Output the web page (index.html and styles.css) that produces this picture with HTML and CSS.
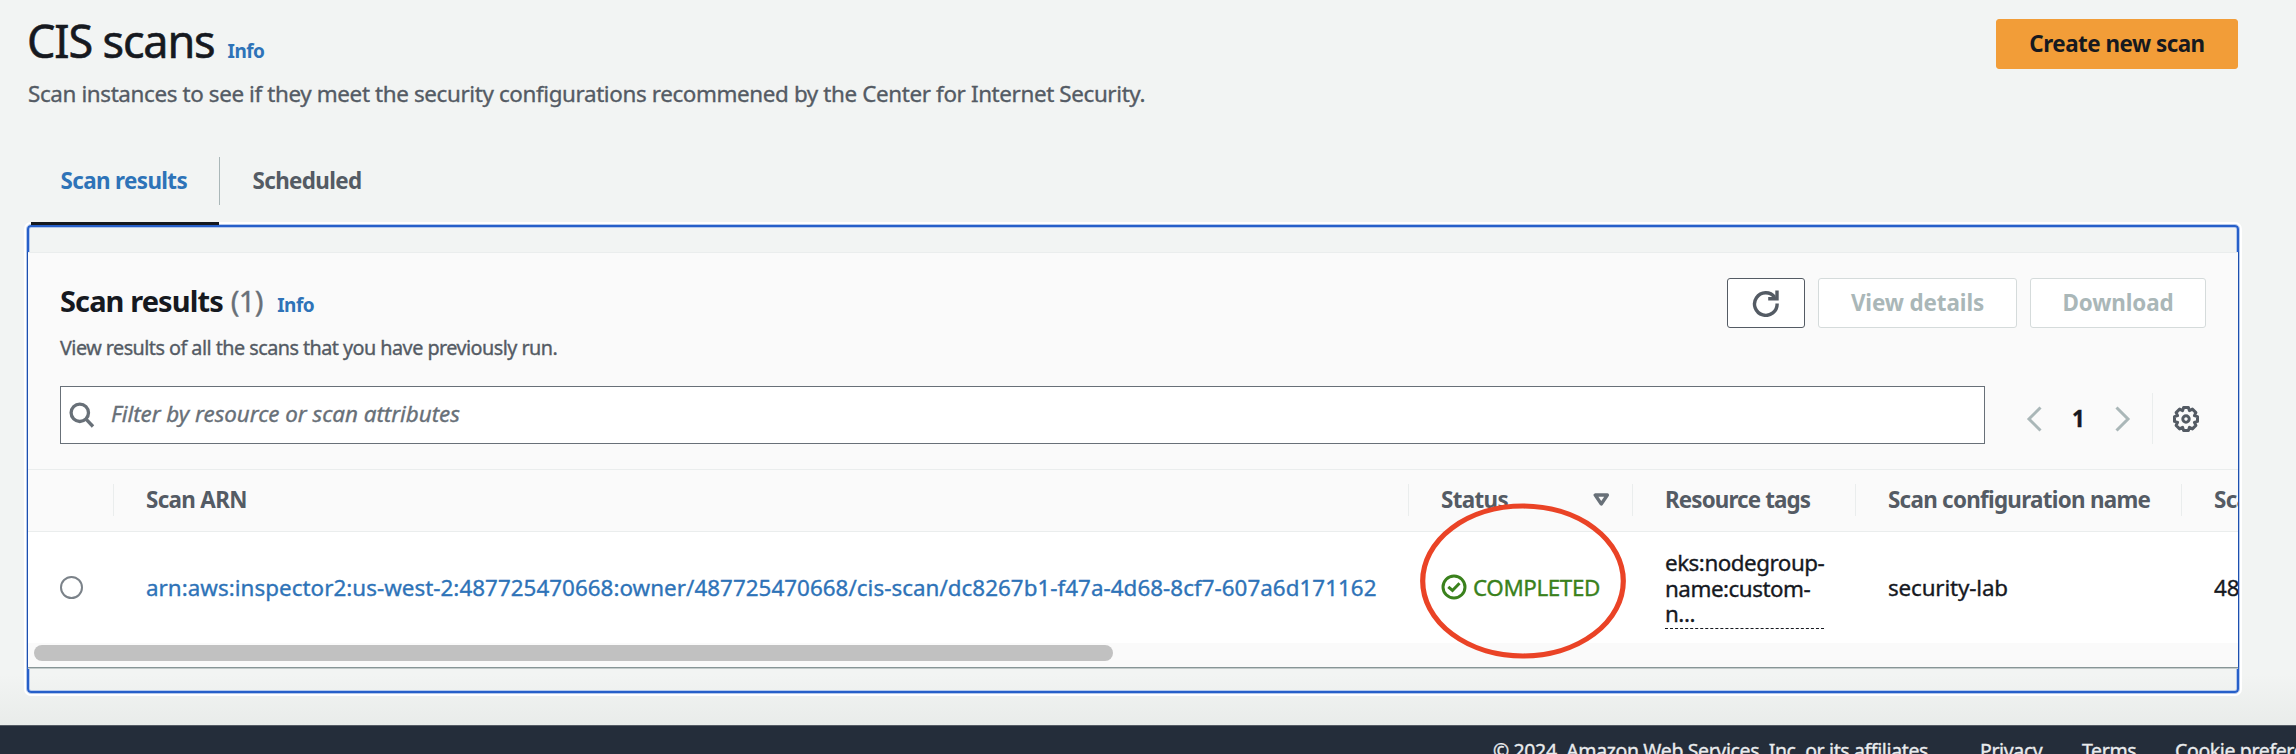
FILE: index.html
```
<!DOCTYPE html>
<html lang="en">
<head>
<meta charset="utf-8">
<title>CIS scans</title>
<link rel="stylesheet" href="styles.css">
</head>
<body>
<main class="page">
  <header class="page-header">
    <div class="page-intro">
      <div class="title-row"><h1 class="page-title">CIS scans</h1><a class="info">Info</a></div>
      <p class="page-desc">Scan instances to see if they meet the security configurations recommened by the Center for Internet Security.</p>
    </div>
    <button class="btn btn-primary">Create new scan</button>
  </header>

  <nav class="tabs">
    <a class="tab tab-active">Scan results</a>
    <a class="tab tab-scheduled">Scheduled</a>
  </nav>

  <section class="focus-frame">
    <div class="panel">
      <div class="panel-header">
        <div class="panel-intro">
          <div class="title-row"><h2 class="panel-title">Scan results</h2><span class="count">(1)</span><a class="info">Info</a></div>
          <p class="panel-desc">View results of all the scans that you have previously run.</p>
        </div>
        <div class="actions">
          <button class="btn btn-refresh" aria-label="Refresh">
            <svg width="28" height="28" viewBox="0 0 28 28" fill="none" stroke="#545b64" stroke-width="3.4"><path d="M25.1 14.500A11.300 11.300 0 1 1 22.800 8.200"/><path d="M25 1.500V9.800H16.200"/></svg>
          </button>
          <button class="btn btn-disabled btn-view">View details</button>
          <button class="btn btn-disabled btn-download">Download</button>
        </div>
      </div>
      <div class="toolbar">
        <div class="search">
          <svg width="26" height="26" viewBox="0 0 26 26" fill="none" stroke="#687078" stroke-width="3.300"><circle cx="10.800" cy="10.800" r="8.700"/><path d="M16.800 16.800L24 24.500"/></svg>
          <span class="placeholder">Filter by resource or scan attributes</span>
        </div>
        <div class="pager">
          <svg width="16" height="26" viewBox="0 0 16 26" fill="none" stroke="#aab7b8" stroke-width="3"><path d="M14.500 1.500L3 13L14.500 24.500"/></svg>
          <span class="page-number">1</span>
          <svg width="16" height="26" viewBox="0 0 16 26" fill="none" stroke="#aab7b8" stroke-width="3"><path d="M1.500 1.500L13 13L1.500 24.500"/></svg>
        </div>
        <div class="settings">
          <svg width="28" height="28" viewBox="-14 -14 28 28" fill="none" stroke="#545b64" stroke-width="3" stroke-linejoin="round"><path d="M-2.400 -11.500H2.400L3.400 -8.400L6.400 -9.900L9.900 -6.400L8.400 -3.400L11.500 -2.400V2.400L8.400 3.400L9.900 6.400L6.400 9.900L3.400 8.400L2.400 11.500H-2.400L-3.400 8.400L-6.400 9.900L-9.900 6.400L-8.400 3.400L-11.500 2.400V-2.400L-8.400 -3.400L-9.900 -6.400L-6.400 -9.900L-3.400 -8.400Z"/><circle r="3.200"/></svg>
        </div>
      </div>
      <div class="grid-row grid-head">
        <div class="th"></div>
        <div class="th">Scan ARN</div>
        <div class="th th-status">Status<svg width="17" height="14" viewBox="0 0 17 14" fill="none" stroke="#687078" stroke-width="3.300" stroke-linejoin="round"><path d="M2.200 2H14.400L8.300 11Z"/></svg></div>
        <div class="th th-tags">Resource tags</div>
        <div class="th th-config">Scan configuration name</div>
        <div class="th">Scan</div>
      </div>
      <div class="grid-row grid-body">
        <div class="td td-select"><span class="radio"></span></div>
        <div class="td"><a class="arn">arn:aws:inspector2:us-west-2:487725470668:owner/487725470668/cis-scan/dc8267b1-f47a-4d68-8cf7-607a6d171162</a></div>
        <div class="td td-status">
          <svg width="26" height="26" viewBox="0 0 26 26" fill="none" stroke="#3a811c" stroke-width="3"><circle cx="13" cy="13" r="11"/><path d="M7.300 12.800L11.500 16.500L18.500 9.300"/></svg>
          <span>COMPLETED</span>
        </div>
        <div class="td td-tags"><span class="tags">eks:nodegroup-<br>name:custom-<br>n...</span></div>
        <div class="td">security-lab</div>
        <div class="td">487725470668</div>
      </div>
      <div class="scrollbar"><div class="thumb"></div></div>
    </div>
  </section>
</main>
<footer class="footer">
  <span class="copyright">© 2024, Amazon Web Services, Inc. or its affiliates.</span>
  <a class="privacy">Privacy</a>
  <a class="terms">Terms</a>
  <a class="cookies">Cookie preferences</a>
</footer>
<svg class="highlight" width="208" height="158" viewBox="0 0 208 158" fill="none" stroke="#ea4326" stroke-width="5.200"><ellipse cx="104" cy="79" rx="100.300" ry="75"/></svg>
</body>
</html>
```
FILE: styles.css
```
* { box-sizing: border-box; }

body {
  margin: 0;
  height: 754px;
  overflow: hidden;
  background: #f2f4f3;
  color: #16191f;
  font: 22.4px/30px "Noto Sans", "Open Sans", sans-serif;
  -webkit-text-stroke: .35px;
  display: flex;
  flex-direction: column;
}

h1, h2, p { margin: 0; }
svg { display: block; flex: none; }

.page {
  height: 725px;
  padding: 13px 58px 0 28px;
  background: linear-gradient(#f2f4f300 674px, #e9ecea) #f2f4f3;
}

.page-header { display: flex; justify-content: space-between; height: 144px; }
.title-row { display: flex; align-items: baseline; }
.page-title { font-size: 45px; line-height: 55px; font-weight: 400; letter-spacing: -1.15px; margin-left: -1px; -webkit-text-stroke: .6px; }
.info { color: #2e73b8; font-weight: 700; font-size: 19px; letter-spacing: -.5px; margin-left: 13px; -webkit-text-stroke: 0; }
.page-desc { color: #545b64; letter-spacing: -.37px; margin-top: 11px; }

.btn {
  height: 50px;
  padding: 0;
  border: 1px solid #d5dbdb;
  border-radius: 3px;
  background: #fff;
  font: 700 22.4px/30px "Noto Sans", "Open Sans", sans-serif;
  letter-spacing: -.1px;
  -webkit-text-stroke: 0;
}
.btn-primary { width: 242px; margin-top: 6px; background: #f29d38; border-color: #f29d38; color: #16191f; letter-spacing: -.5px; }
.btn-refresh { width: 78px; border-color: #545b64; display: flex; align-items: center; justify-content: center; }
.btn-disabled { color: #aab7b8; }
.btn-view { width: 199px; }
.btn-download { width: 176px; }

.tabs { display: flex; height: 68px; margin-left: 3px; font-weight: 700; letter-spacing: -.62px; line-height: 48px; color: #545b64; position: relative; z-index: 1; -webkit-text-stroke: 0; }
.tab { padding-left: 32.500px; }
.tab-active { width: 188px; padding-left: 29.500px; color: #2e73b8; border-bottom: 3px solid #16191f; }
.tab-scheduled { border-left: 1px solid #aab7b8; height: 48px; }

.focus-frame {
  width: 2214px;
  height: 470px;
  margin: -1px 0 0 -2px;
  padding: 27px 1px 0;
  border: 1px solid #b4c8ec;
  border-radius: 5px;
  box-shadow: inset 0 0 0 2px #265fc9, inset 0 0 0 3px #b4c8ec, 0 0 0 2px #fff;
}

.panel {
  height: 415px;
  border-top: 1px solid #eaeded;
  background: #fafafa;
  box-shadow: -1px 0 0 #1d4fae, 1px 0 0 #1d4fae, 0 1px 0 #879596, 0 2px 0 #c4cccc;
  overflow: hidden;
}

.panel-header { display: flex; justify-content: space-between; height: 133px; padding: 25px 32px 0; }
.panel-title { font-size: 29px; line-height: 38px; font-weight: 700; letter-spacing: -.9px; -webkit-text-stroke: 0; }
.count { font-size: 29px; color: #687078; margin-left: 8px; letter-spacing: -.7px; }
.panel .info { margin-left: 14.500px; }
.panel-intro { padding-top: 4px; }
.panel-desc { font-size: 19.800px; letter-spacing: -.53px; color: #545b64; margin-top: 13px; }
.actions { display: flex; gap: 13px; }

.toolbar { display: flex; height: 84px; padding-left: 32px; border-bottom: 1px solid #eaeded; }
.search { width: 1925px; height: 58px; border: 1px solid #687078; background: #fff; display: flex; align-items: center; padding-left: 8px; gap: 16px; }
.placeholder { font-style: italic; color: #687078; letter-spacing: -.03px; margin-top: -2px; }
.pager { display: flex; align-items: center; margin-left: 41px; height: 66px; }
.page-number { width: 73px; text-align: center; font-weight: 700; }
.settings { display: flex; align-items: center; justify-content: center; margin: 7px 0 0 21px; width: 67px; height: 51px; border-left: 1px solid #eaeded; }

.grid-row { display: grid; grid-template-columns: 86px 1295px 224px 223px 326px 300px; }
.grid-head { height: 62px; padding-top: 14px; border-bottom: 1px solid #eaeded; color: #545b64; font-weight: 700; letter-spacing: -.67px; -webkit-text-stroke: 0; }
.th { height: 32px; line-height: 32px; padding-left: 32px; border-right: 1px solid #eaeded; }
.th-status { display: flex; justify-content: space-between; padding-right: 22px; }
.th-status svg { margin-top: 9px; }
.th-tags { letter-spacing: -.88px; }
.th-config { letter-spacing: -.72px; }

.grid-body { height: 111px; background: #fff; align-items: center; }
.td { padding: 1px 0 0 32px; letter-spacing: -.15px; }
.td-select { padding-top: 0; }
.radio { display: block; width: 23px; height: 23px; border: 2px solid #7b8289; border-radius: 50%; margin-left: -.5px; }
.arn { color: #2e73b8; letter-spacing: .03px; }
.td-status { display: flex; gap: 6px; align-items: center; color: #3a811c; letter-spacing: -.4px; }
.td-status svg { margin-top: -2px; }
.td-tags { padding-top: 4px; }
.tags { display: block; width: 159px; height: 79px; line-height: 25.600px; letter-spacing: -.48px; border-bottom: 1px dashed #16191f; white-space: nowrap; }

.scrollbar { height: 22px; padding: 2px 6px; }
.thumb { width: 1079px; height: 16px; border-radius: 8px; background: #c1c1c1; }

.footer {
  height: 29px;
  border-top: 1px solid #545b64;
  background: #242d3a;
  color: #e9ebed;
  font-size: 19.500px;
  letter-spacing: -.37px;
  line-height: 50px;
  display: flex;
  padding-left: 1493px;
  white-space: nowrap;
  overflow: hidden;
}
.copyright { width: 487px; }
.privacy { width: 102px; }
.terms { width: 93px; }
.copyright, .privacy, .terms { flex: none; }

.highlight { position: absolute; left: 1419px; top: 502px; }
```
